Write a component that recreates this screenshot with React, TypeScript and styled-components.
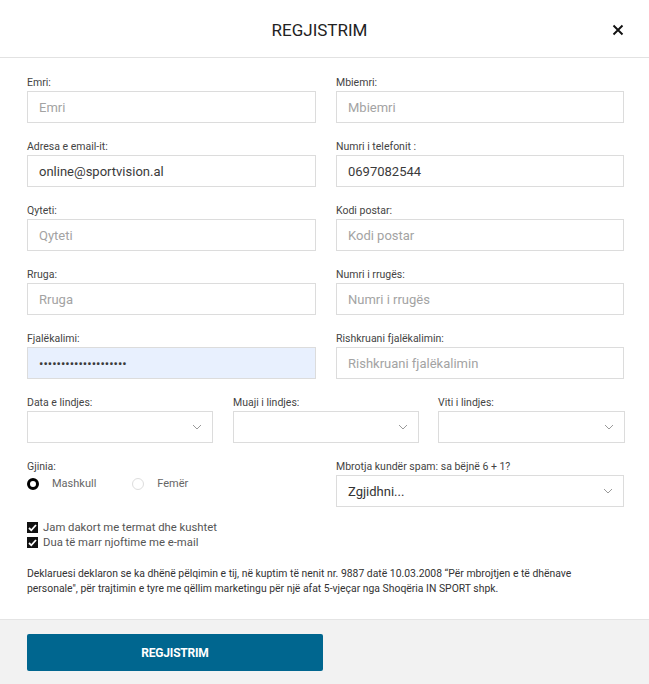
import styled, { createGlobalStyle } from "styled-components"

const GlobalStyle = createGlobalStyle`
  html, body {
    margin: 0;
    padding: 0;
    background: #ffffff;
    font-family: Roboto, "Liberation Sans", Arial, sans-serif;
  }
  * { box-sizing: border-box; }
`

const Chevron = () => (
  <svg width="10" height="6" viewBox="0 0 10 6" fill="none">
    <path d="M1 1l4 4 4-4" stroke="#9a9a9a" strokeWidth="1" />
  </svg>
)

const Tick = () => (
  <svg width="9" height="8" viewBox="0 0 9 8">
    <path d="M1 4l2.3 2.3L8 1" stroke="#fff" strokeWidth="1.8" fill="none" />
  </svg>
)

const Field = ({ label, placeholder, value, type = "text", filled }: {
  label: string
  placeholder?: string
  value?: string
  type?: string
  filled?: boolean
}) => (
  <FieldWrap>
    <Label>{label}</Label>
    <Input type={type} placeholder={placeholder} value={value} readOnly $filled={filled} />
  </FieldWrap>
)

const SelectField = ({ label, text }: { label: string; text?: string }) => (
  <FieldWrap>
    <Label>{label}</Label>
    <SelectBox>
      <SelectText>{text}</SelectText>
      <Chevron />
    </SelectBox>
  </FieldWrap>
)

const App = () => (
  <Modal>
    <GlobalStyle />
    <Header>
      <Title>REGJISTRIM</Title>
      <Close aria-label="close">
        <svg width="12" height="12" viewBox="0 0 12 12">
          <path d="M1.5 1.5l9 9M10.5 1.5l-9 9" stroke="#111" strokeWidth="1.9" />
        </svg>
      </Close>
    </Header>
    <Body>
      <TwoCols>
        <Field label="Emri:" placeholder="Emri" />
        <Field label="Mbiemri:" placeholder="Mbiemri" />
        <Field label="Adresa e email-it:" value="online@sportvision.al" />
        <Field label="Numri i telefonit :" value="0697082544" />
        <Field label="Qyteti:" placeholder="Qyteti" />
        <Field label="Kodi postar:" placeholder="Kodi postar" />
        <Field label="Rruga:" placeholder="Rruga" />
        <Field label="Numri i rrugës:" placeholder="Numri i rrugës" />
        <Field label="Fjalëkalimi:" type="password" value="••••••••••••••••••••" filled />
        <Field label="Rishkruani fjalëkalimin:" placeholder="Rishkruani fjalëkalimin" />
      </TwoCols>
      <ThreeCols>
        <SelectField label="Data e lindjes:" />
        <SelectField label="Muaji i lindjes:" />
        <SelectField label="Viti i lindjes:" />
      </ThreeCols>
      <TwoCols>
        <FieldWrap>
          <Label>Gjinia:</Label>
          <RadioRow>
            <RadioItem>
              <Radio $checked />
              Mashkull
            </RadioItem>
            <RadioItem>
              <Radio />
              Femër
            </RadioItem>
          </RadioRow>
        </FieldWrap>
        <SelectField label="Mbrotja kundër spam: sa bëjnë 6 + 1?" text="Zgjidhni..." />
      </TwoCols>
      <Checks>
        <CheckRow>
          <CheckBox>
            <Tick />
          </CheckBox>
          Jam dakort me termat dhe kushtet
        </CheckRow>
        <CheckRow>
          <CheckBox>
            <Tick />
          </CheckBox>
          Dua të marr njoftime me e-mail
        </CheckRow>
      </Checks>
      <Notice>
        Deklaruesi deklaron se ka dhënë pëlqimin e tij, në kuptim të nenit nr. 9887 datë 10.03.2008 “Për mbrojtjen e të dhënave
        <br />
        personale", për trajtimin e tyre me qëllim marketingu për një afat 5-vjeçar nga Shoqëria IN SPORT shpk.
      </Notice>
    </Body>
    <Footer>
      <SubmitButton>REGJISTRIM</SubmitButton>
    </Footer>
  </Modal>
)

const Modal = styled.div`
  width: 649px;
  height: 684px;
  display: flex;
  flex-direction: column;
  background: #fff;
  color: #333;
`

const Header = styled.div`
  height: 58px;
  border-bottom: 1px solid #e2e2e2;
  display: flex;
  align-items: center;
  justify-content: center;
  padding-right: 10px;
  position: relative;
`

const Title = styled.h1`
  margin: 0;
  font-size: 17px;
  font-weight: 400;
  color: #222;
  letter-spacing: 0;
  padding-top: 2px;
`

const Close = styled.button`
  position: absolute;
  right: 25px;
  top: 24px;
  border: 0;
  background: none;
  padding: 0;
  width: 12px;
  height: 12px;
  display: flex;
`

const Body = styled.div`
  flex: 1;
  padding: 18px 25px 0 27px;
  display: flex;
  flex-direction: column;
  gap: 17px;
`

const TwoCols = styled.div`
  display: grid;
  grid-template-columns: 289px 288px;
  column-gap: 20px;
  row-gap: 17px;
`

const ThreeCols = styled.div`
  display: grid;
  grid-template-columns: 186px 186px 186px;
  column-gap: 20px;
  & > :last-child {
    margin-left: -1px;
  }
`

const FieldWrap = styled.div`
  display: flex;
  flex-direction: column;
`

const Label = styled.label`
  font-size: 10.5px;
  line-height: 13px;
  color: #444;
  margin-bottom: 2px;
`

const Input = styled.input<{ $filled?: boolean }>`
  height: 32px;
  width: 100%;
  border: 1px solid #dcdcdc;
  background: ${(p) => (p.$filled ? "#e8f0fe" : "#fff")};
  padding: 0 11px;
  font-family: Roboto, "Liberation Sans", Arial, sans-serif;
  font-size: 13px;
  color: #3a3a3a;
  outline: none;
  &::placeholder {
    color: #a3a3a3;
  }
`

const SelectBox = styled.div`
  height: 32px;
  border: 1px solid #dcdcdc;
  display: flex;
  align-items: center;
  justify-content: space-between;
  padding: 0 10px 0 11px;
`

const SelectText = styled.span`
  font-size: 13px;
  color: #333;
`

const RadioRow = styled.div`
  display: flex;
  align-items: center;
  gap: 36px;
  margin-top: 2px;
`

const RadioItem = styled.span`
  display: flex;
  align-items: center;
  gap: 13px;
  font-size: 11px;
  color: #666;
`

const Radio = styled.span<{ $checked?: boolean }>`
  width: 12px;
  height: 12px;
  border-radius: 50%;
  border: ${(p) => (p.$checked ? "3.5px solid #000" : "1px solid #dddddd")};
  background: #fff;
`

const Checks = styled.div`
  display: flex;
  flex-direction: column;
  margin-top: -4px;
`

const CheckRow = styled.div`
  display: flex;
  align-items: center;
  gap: 5px;
  font-size: 11.3px;
  line-height: 15px;
  color: #555;
`

const CheckBox = styled.span`
  width: 11px;
  height: 11px;
  background: #111;
  display: flex;
  align-items: center;
  justify-content: center;
`

const Notice = styled.p`
  margin: -1px 0 0;
  font-size: 10.4px;
  line-height: 15px;
  color: #333;
`

const Footer = styled.div`
  height: 65px;
  background: #f2f2f2;
  border-top: 1px solid #e4e4e4;
  padding: 14px 27px 0;
`

const SubmitButton = styled.button`
  width: 296px;
  height: 37px;
  border: 0;
  border-radius: 2px;
  background: #00668f;
  color: #fff;
  font-family: Roboto, "Liberation Sans", Arial, sans-serif;
  font-size: 12px;
  font-weight: 700;
  letter-spacing: -0.2px;
`

export default App
